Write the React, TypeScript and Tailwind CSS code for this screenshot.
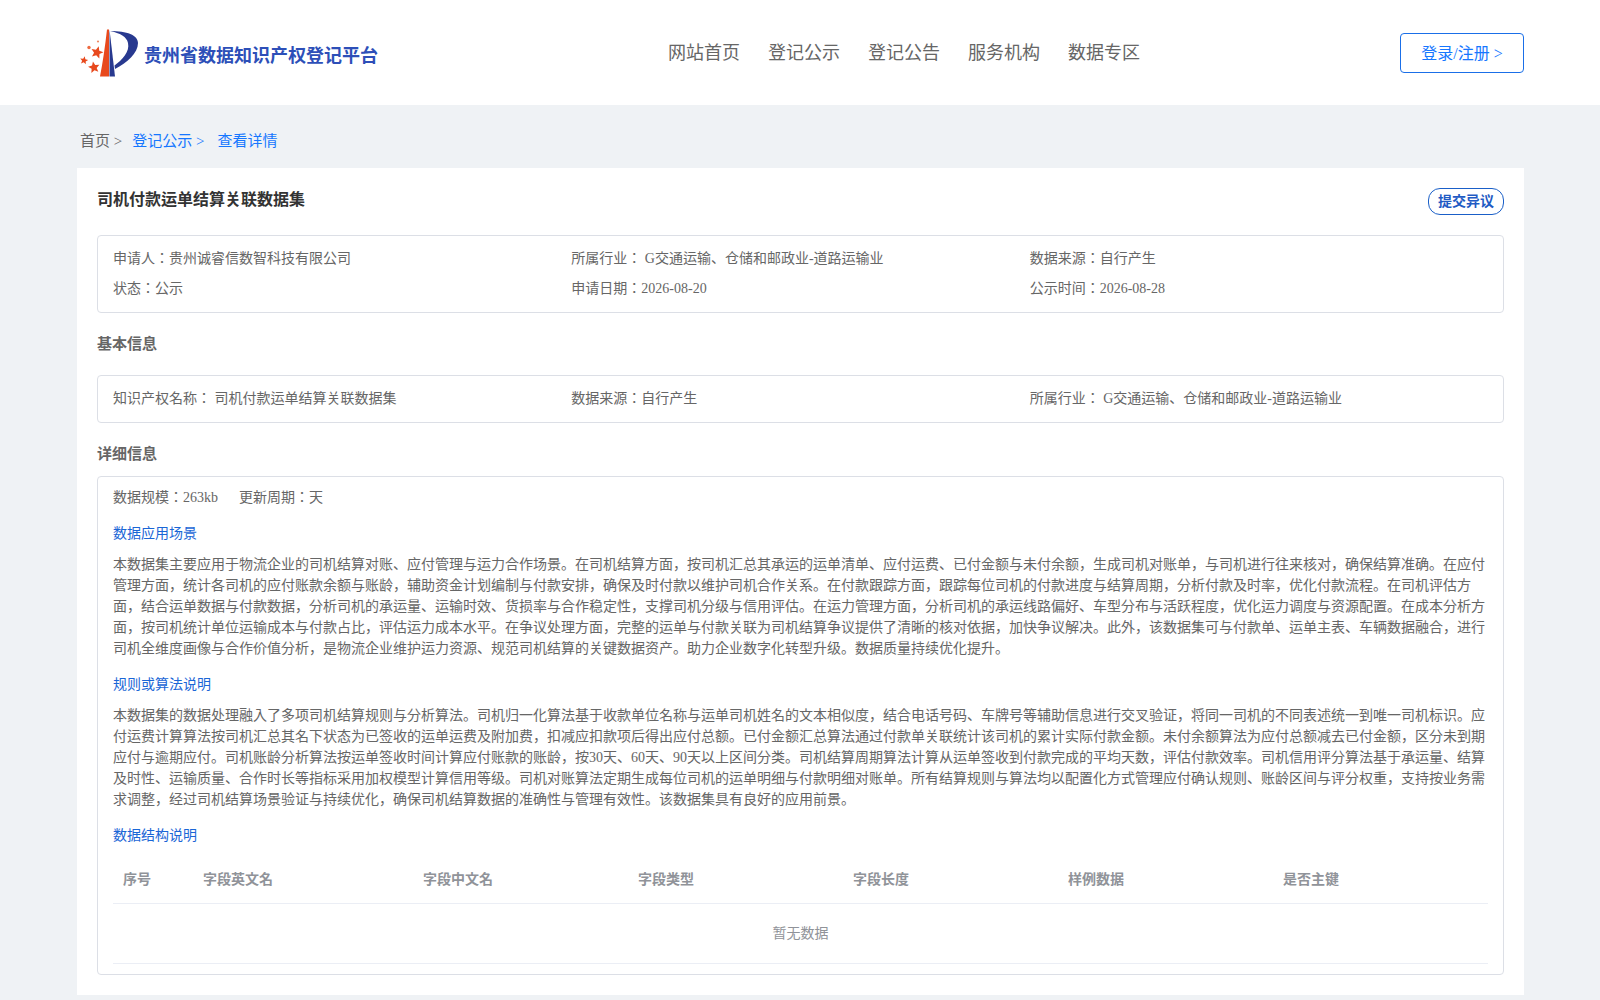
const serif = "font-['Liberation_Serif','Noto_Sans_CJK_JP',serif]";

const navItems = ['网站首页', '登记公示', '登记公告', '服务机构', '数据专区'];
const columns = ['字段英文名', '字段中文名', '字段类型', '字段长度', '样例数据', '是否主键'];

function starPoints(cx: number, cy: number, r: number, rot: number) {
  const pts: string[] = [];
  for (let i = 0; i < 10; i++) {
    const rad = i % 2 === 0 ? r : r * 0.45;
    const a = ((rot + i * 36 - 90) * Math.PI) / 180;
    pts.push(`${(cx + rad * Math.cos(a)).toFixed(2)},${(cy + rad * Math.sin(a)).toFixed(2)}`);
  }
  return pts.join(' ');
}

function Logo() {
  return (
    <svg width="58" height="50" viewBox="0 0 58 50" className="shrink-0">
      <path d="M27 1.500 L29 1.500 L29 48.500 L20 48.500 Q24 28 27 1.500 Z" fill="#e8491d" />
      <path d="M29.500 1.500 L35 48.500 L29.500 48.500 Z" fill="#28398f" />
      <path d="M30 3 C47 3 58 7 58 15 C58 25 47 35 35 41 L34.500 37.500 C42 32 50 24 48 15 C47 9 40 5 30 3 Z" fill="#28398f" />
      <polygon points={starPoints(17, 24.5, 6.5, 15)} fill="#e8491d" />
      <polygon points={starPoints(14, 39.5, 6, -10)} fill="#e8491d" />
      <polygon points={starPoints(4, 32.5, 4.2, 10)} fill="#e8491d" />
      <circle cx="9" cy="19.500" r="1.700" fill="#ee6a40" />
      <circle cx="18" cy="13.500" r="1.100" fill="#ee8a65" />
    </svg>
  );
}

function InfoBox({ rows }: { rows: string[][] }) {
  return (
    <div className="rounded-[4px] border border-[#dcdfe6] px-[15px] py-[8px]">
      {rows.map((row) => (
        <div key={row[0]} className="grid grid-cols-3">
          {row.map((cell) => (
            <div key={cell} className="h-[30px] text-[14px] leading-[30px] text-[#666]">{cell}</div>
          ))}
        </div>
      ))}
    </div>
  );
}

export default function App() {
  return (
    <div className={`min-h-[1000px] bg-[#eff2f5] ${serif}`}>
      <header className="flex h-[105px] items-center bg-white pl-[80px] pr-[76px]">
        <div className="flex w-[588px] items-center gap-[6px]">
          <Logo />
          <span className="pt-[7px] text-[18px] font-bold text-[#2d4fb8]">贵州省数据知识产权登记平台</span>
        </div>
        <nav className="flex gap-[28px] pt-[1px] text-[18px] text-[#666]">
          {navItems.map((item) => <span key={item}>{item}</span>)}
        </nav>
        <div className="flex flex-1 justify-end">
          <button type="button" className="h-[40px] w-[124px] rounded-[4px] border border-[#1a6fe8] pt-[3px] text-[16px] text-[#1677ff]">
            登录/注册 &gt;
          </button>
        </div>
      </header>

      <div className="flex h-[63px] items-center px-[80px] pt-[10px] text-[15px] text-[#666]">
        <span className="mr-[10px]">首页 &gt;</span>
        <span className="mr-[13px] text-[#1677ff]">登记公示 &gt;</span>
        <span className="text-[#1677ff]">查看详情</span>
      </div>

      <main className="ml-[77px] mr-[76px] h-[827px] bg-white px-[20px] pt-[20px]">
        <div className="flex items-start justify-between">
          <h1 className="text-[16px] font-bold leading-[24px] text-[#333]">司机付款运单结算关联数据集</h1>
          <button type="button" className="h-[27px] w-[76px] rounded-[12px] border border-[#1a5fc8] text-[14px] font-bold text-[#1f5bc4]">提交异议</button>
        </div>

        <div className="mt-[20px]">
          <InfoBox rows={[
            ['申请人：贵州诚睿信数智科技有限公司', '所属行业： G交通运输、仓储和邮政业-道路运输业', '数据来源：自行产生'],
            ['状态：公示', '申请日期：2026-08-20', '公示时间：2026-08-28'],
          ]} />
        </div>

        <h2 className="mt-[21px] text-[15px] font-bold leading-[21px] text-[#666]">基本信息</h2>

        <div className="mt-[20px]">
          <InfoBox rows={[['知识产权名称： 司机付款运单结算关联数据集', '数据来源：自行产生', '所属行业： G交通运输、仓储和邮政业-道路运输业']]} />
        </div>

        <h2 className="mt-[21px] text-[15px] font-bold leading-[21px] text-[#666]">详细信息</h2>

        <section className="mt-[11px] h-[499px] rounded-[4px] border border-[#dcdfe6] px-[15px] pt-[10px] text-[14px] leading-[21px] text-[#666]">
          <p>数据规模：263kb<span className="ml-[21px]">更新周期：天</span></p>
          <h3 className="mt-[15px] text-[#1a66d6]">数据应用场景</h3>
          <p className="mt-[10px]">本数据集主要应用于物流企业的司机结算对账、应付管理与运力合作场景。在司机结算方面，按司机汇总其承运的运单清单、应付运费、已付金额与未付余额，生成司机对账单，与司机进行往来核对，确保结算准确。在应付管理方面，统计各司机的应付账款余额与账龄，辅助资金计划编制与付款安排，确保及时付款以维护司机合作关系。在付款跟踪方面，跟踪每位司机的付款进度与结算周期，分析付款及时率，优化付款流程。在司机评估方面，结合运单数据与付款数据，分析司机的承运量、运输时效、货损率与合作稳定性，支撑司机分级与信用评估。在运力管理方面，分析司机的承运线路偏好、车型分布与活跃程度，优化运力调度与资源配置。在成本分析方面，按司机统计单位运输成本与付款占比，评估运力成本水平。在争议处理方面，完整的运单与付款关联为司机结算争议提供了清晰的核对依据，加快争议解决。此外，该数据集可与付款单、运单主表、车辆数据融合，进行司机全维度画像与合作价值分析，是物流企业维护运力资源、规范司机结算的关键数据资产。助力企业数字化转型升级。数据质量持续优化提升。</p>
          <h3 className="mt-[15px] text-[#1a66d6]">规则或算法说明</h3>
          <p className="mt-[10px]">本数据集的数据处理融入了多项司机结算规则与分析算法。司机归一化算法基于收款单位名称与运单司机姓名的文本相似度，结合电话号码、车牌号等辅助信息进行交叉验证，将同一司机的不同表述统一到唯一司机标识。应付运费计算算法按司机汇总其名下状态为已签收的运单运费及附加费，扣减应扣款项后得出应付总额。已付金额汇总算法通过付款单关联统计该司机的累计实际付款金额。未付余额算法为应付总额减去已付金额，区分未到期应付与逾期应付。司机账龄分析算法按运单签收时间计算应付账款的账龄，按30天、60天、90天以上区间分类。司机结算周期算法计算从运单签收到付款完成的平均天数，评估付款效率。司机信用评分算法基于承运量、结算及时性、运输质量、合作时长等指标采用加权模型计算信用等级。司机对账算法定期生成每位司机的运单明细与付款明细对账单。所有结算规则与算法均以配置化方式管理应付确认规则、账龄区间与评分权重，支持按业务需求调整，经过司机结算场景验证与持续优化，确保司机结算数据的准确性与管理有效性。该数据集具有良好的应用前景。</p>
          <h3 className="mt-[15px] text-[#1a66d6]">数据结构说明</h3>
          <div className="mt-[10px]">
            <div className="flex h-[48px] items-center border-b border-[#ebeef5] font-bold text-[#909399]">
              <div className="w-[90px] shrink-0 pl-[10px]">序号</div>
              {columns.map((col, i) => (
                <div key={col} className={`shrink-0 ${i === 0 ? 'w-[220px]' : i === 5 ? 'w-[206px]' : 'w-[215px]'}`}>{col}</div>
              ))}
            </div>
            <div className="flex h-[60px] items-center justify-center border-b border-[#ebeef5] text-[#909399]">暂无数据</div>
          </div>
        </section>
      </main>
    </div>
  );
}
